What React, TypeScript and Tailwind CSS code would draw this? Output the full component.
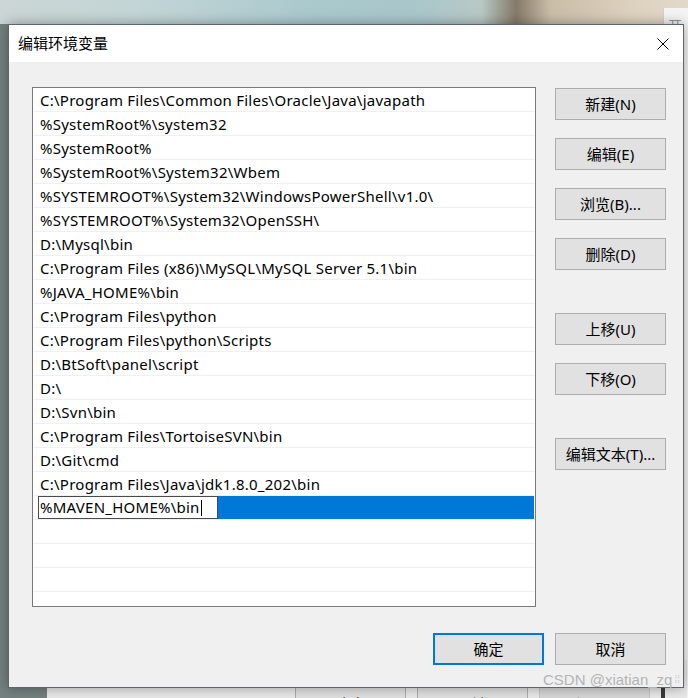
const paths = [
  "C:\\Program Files\\Common Files\\Oracle\\Java\\javapath",
  "%SystemRoot%\\system32",
  "%SystemRoot%",
  "%SystemRoot%\\System32\\Wbem",
  "%SYSTEMROOT%\\System32\\WindowsPowerShell\\v1.0\\",
  "%SYSTEMROOT%\\System32\\OpenSSH\\",
  "D:\\Mysql\\bin",
  "C:\\Program Files (x86)\\MySQL\\MySQL Server 5.1\\bin",
  "%JAVA_HOME%\\bin",
  "C:\\Program Files\\python",
  "C:\\Program Files\\python\\Scripts",
  "D:\\BtSoft\\panel\\script",
  "D:\\",
  "D:\\Svn\\bin",
  "C:\\Program Files\\TortoiseSVN\\bin",
  "D:\\Git\\cmd",
  "C:\\Program Files\\Java\\jdk1.8.0_202\\bin",
];

const font = "font-['Noto_Sans','Noto_Sans_CJK_SC',sans-serif]";

function SideButton({ label, className = "" }: { label: string; className?: string }) {
  return (
    <button
      className={`h-8 w-[111px] border border-[#adadad] bg-[#e1e1e1] text-[15px] text-black ${className}`}
    >
      {label}
    </button>
  );
}

function App() {
  return (
    <div
      className={`relative h-[698px] w-[688px] overflow-hidden bg-[#74817f] ${font}`}
    >
      {/* desktop wallpaper strip at the top */}
      <div className="h-6 w-full bg-[linear-gradient(90deg,#cbd6d5_0%,#c3d5d6_20%,#aac9cd_45%,#a9c7cb_60%,#b8c8c6_70%,#857a69_75%,#c9bda8_80%,#ddd2bf_92%,#e2d9c8_100%)]" />

      {/* window behind, top right corner */}
      <div className="absolute left-[663px] top-[8px] h-[690px] w-[30px] border-l border-[#d0d0d0] bg-[#f4f4f4] pl-[4px] text-[14px] leading-none text-[#8a96a0]">
        <div className="pt-[11px]">开</div>
      </div>

      {/* window behind, bottom buttons */}
      <div className="absolute left-[47px] top-[660px] flex h-[60px] w-[640px] gap-[11px] bg-[#e9e9e9] pl-[248px] pt-[27px]">
        <div className="h-8 w-[111px] border border-[#adadad] bg-[#e1e1e1] text-center text-[15px] leading-[32px]">
          确定
        </div>
        <div className="h-8 w-[111px] border border-[#adadad] bg-[#e1e1e1] text-center text-[15px] leading-[32px]">
          取消
        </div>
        <div className="h-8 w-[111px] border border-[#c6c6c6] bg-[#d6d6d6] text-center text-[15px] leading-[32px] text-[#a0a0a0]">
          应用(A)
        </div>
        <div className="h-full w-[4px] bg-[#3a3a3a]" />
      </div>

      {/* dialog */}
      <div className="absolute left-[8px] top-[24px] flex h-[664px] w-[676px] flex-col border border-[#5d666b] bg-[#f0f0f0] shadow-[0_0_12px_rgba(0,0,0,0.35)]">
        <div className="flex h-[37px] items-center justify-between bg-white pl-[9px] pr-[14px]">
          <span className="text-[15px] text-black">编辑环境变量</span>
          <svg width="12" height="12" viewBox="0 0 12 12">
            <path d="M0.5 0.5 L11.5 11.5 M11.5 0.5 L0.5 11.5" stroke="#000" strokeWidth="1" />
          </svg>
        </div>

        <div className="flex flex-1 flex-col pl-[23px] pr-[17px] pt-[25px]">
          <div className="flex gap-[19px]">
            {/* list box */}
            <div className="h-[520px] w-[504px] overflow-hidden border border-[#7a7a7a] bg-white">
              {paths.map((p) => (
                <div
                  key={p}
                  className="flex h-6 items-center border-b border-[#f0f0f0] pl-[7px] pt-px text-[15px] tracking-[0.25px] text-black"
                >
                  {p}
                </div>
              ))}
              <div className="flex h-6 items-stretch border-b border-[#f0f0f0] pl-[5px] pr-px">
                <div className="flex w-[180px] items-center border border-[#4a4a4a] bg-white pl-px text-[15px] tracking-[0.25px] text-black">
                  %MAVEN_HOME%\bin
                  <span className="ml-px h-4 w-px bg-black" />
                </div>
                <div className="flex-1 bg-[#0078d7]" />
              </div>
              {Array.from({ length: 5 }).map((_, i) => (
                <div key={i} className="h-6 border-b border-[#f0f0f0]" />
              ))}
            </div>

            {/* side buttons */}
            <div className="flex flex-col pt-px">
              <SideButton label="新建(N)" />
              <SideButton label="编辑(E)" className="mt-[18px]" />
              <SideButton label="浏览(B)..." className="mt-[18px]" />
              <SideButton label="删除(D)" className="mt-[18px]" />
              <SideButton label="上移(U)" className="mt-[43px]" />
              <SideButton label="下移(O)" className="mt-[18px]" />
              <SideButton label="编辑文本(T)..." className="mt-[43px]" />
            </div>
          </div>

          <div className="mt-[26px] flex justify-end gap-[11px]">
            <button className="h-8 w-[111px] border-2 border-[#0078d7] bg-[#e1e1e1] text-[15px] text-black">
              确定
            </button>
            <SideButton label="取消" />
          </div>
        </div>
      </div>

      {/* watermark */}
      <div className="absolute left-[543px] top-[669px] flex items-center gap-[2px] font-['Liberation_Sans',sans-serif] text-[15px] text-[#b4b4b4]">
        CSDN @xiatian_zq
        <span className="text-[10px] leading-none text-[#c8c8c8]">⁞⁞</span>
      </div>
    </div>
  );
}

export default App;
